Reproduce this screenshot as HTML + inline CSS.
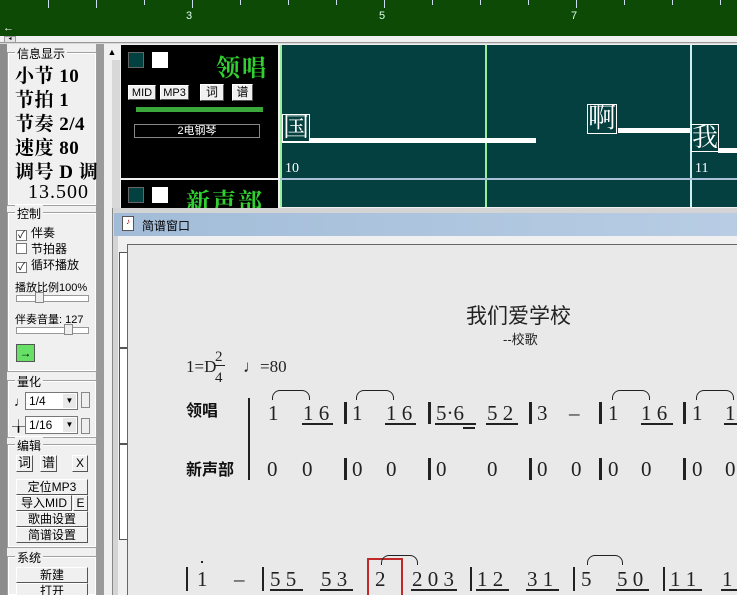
<!DOCTYPE html>
<html><head><meta charset="utf-8"><style>
*{margin:0;padding:0;box-sizing:border-box}
html{width:737px;height:595px;overflow:hidden}
body{width:737px;height:595px;overflow:hidden;position:relative;background:#d8d8d8;font-family:"Liberation Sans","Noto Sans CJK SC",sans-serif}
.a{position:absolute}
.cj{font-family:"Liberation Serif","Noto Serif CJK SC",serif}
.grp{position:absolute;left:8px;width:88px;border:1px solid #fff;outline:1px solid #a0a0a0;background:#f0f0f0}
.gt{position:absolute;top:-9px;left:6px;background:#f0f0f0;font-size:12px;padding:0 2px;color:#000}
.info{position:absolute;left:15px;font-size:19px;font-weight:bold;font-family:"Liberation Serif","Noto Serif CJK SC",serif;color:#000;white-space:nowrap;letter-spacing:0.5px}
.cb{position:absolute;left:8px;font-size:12px;white-space:nowrap}
.cb i{display:inline-block;width:11px;height:11px;border:1px solid #777;background:#fff;vertical-align:-1px;margin-right:4px;font-style:normal;font-size:10px;line-height:9px;text-align:center}
.btn{position:absolute;background:#f0f0f0;border:1px solid;border-color:#fff #555 #555 #fff;font-size:12px;text-align:center;line-height:14px}
.n{position:absolute;font-family:"Liberation Serif",serif;font-size:21px;color:#222;line-height:20px;white-space:nowrap}
.bar{position:absolute;width:3px;height:22px;background:#222}
.ul{position:absolute;height:1.5px;background:#222}
.tie{position:absolute;height:10px;border:1.5px solid #222;border-bottom:none;border-radius:8px 8px 0 0}
</style></head><body>
<div class="a" style="left:0;top:0;width:737px;height:36px;background:#0c4a06"></div>
<div class="a" style="left:48px;top:0;width:1px;height:8px;background:#cde"></div>
<div class="a" style="left:96px;top:0;width:1px;height:8px;background:#cde"></div>
<div class="a" style="left:144px;top:0;width:1px;height:5px;background:#cde"></div>
<div class="a" style="left:192px;top:0;width:1px;height:8px;background:#cde"></div>
<div class="a" style="left:240px;top:0;width:1px;height:5px;background:#cde"></div>
<div class="a" style="left:288px;top:0;width:1px;height:5px;background:#cde"></div>
<div class="a" style="left:336px;top:0;width:1px;height:5px;background:#cde"></div>
<div class="a" style="left:384px;top:0;width:1px;height:8px;background:#cde"></div>
<div class="a" style="left:432px;top:0;width:1px;height:5px;background:#cde"></div>
<div class="a" style="left:480px;top:0;width:1px;height:5px;background:#cde"></div>
<div class="a" style="left:528px;top:0;width:1px;height:5px;background:#cde"></div>
<div class="a" style="left:576px;top:0;width:1px;height:8px;background:#cde"></div>
<div class="a" style="left:624px;top:0;width:1px;height:5px;background:#cde"></div>
<div class="a" style="left:672px;top:0;width:1px;height:5px;background:#cde"></div>
<div class="a" style="left:720px;top:0;width:1px;height:5px;background:#cde"></div>
<div class="a" style="left:186px;top:10px;color:#dfe;font-size:11px">3</div>
<div class="a" style="left:379px;top:10px;color:#dfe;font-size:11px">5</div>
<div class="a" style="left:571px;top:10px;color:#dfe;font-size:11px">7</div>
<div class="a" style="left:3px;top:22px;color:#fff;font-size:11px">&larr;</div>
<div class="a" style="left:0;top:36px;width:737px;height:7px;background:#f0f0f0;border-bottom:1px solid #999"></div>
<div class="a" style="left:4px;top:36px;width:12px;height:7px;background:#e4e4e4;border:1px solid #999;font-size:6px;line-height:5px;text-align:center">◂</div>
<div class="a" style="left:0;top:44px;width:7px;height:551px;background:#8c8c8c"></div>
<div class="a" style="left:7px;top:44px;width:93px;height:551px;background:#f0f0f0"></div>
<div class="a" style="left:96px;top:44px;width:8px;height:551px;background:#9a9a9a"></div>
<div class="a" style="left:104px;top:44px;width:8px;height:551px;background:#f0f0f0"></div>
<div class="a" style="left:104px;top:44px;width:16px;height:16px;background:#f0f0f0;font-size:9px;text-align:center;line-height:16px">▲</div>
<div class="grp" style="top:53px;height:152px"><span class="gt">信息显示</span></div>
<div class="info" style="top:61px">小节 10</div>
<div class="info" style="top:85px">节拍 1</div>
<div class="info" style="top:109px">节奏 2/4</div>
<div class="info" style="top:133px">速度 80</div>
<div class="info" style="top:157px">调号 D 调</div>
<div class="info" style="top:181px;left:28px;font-weight:normal;font-size:20px;letter-spacing:1px">13.500</div>
<div class="grp" style="top:213px;height:158px"><span class="gt">控制</span></div>
<div class="cb" style="top:224px;left:16px"><i>✓</i>伴奏</div>
<div class="cb" style="top:240px;left:16px"><i></i>节拍器</div>
<div class="cb" style="top:256px;left:16px"><i>✓</i>循环播放</div>
<div class="a" style="left:15px;top:279px;font-size:11px">播放比例100%</div>
<div class="a" style="left:16px;top:295px;width:73px;height:7px;background:#fff;border:1px solid #999"></div>
<div class="a" style="left:35px;top:292px;width:9px;height:11px;background:#eee;border:1px solid #888"></div>
<div class="a" style="left:15px;top:311px;font-size:11px">伴奏音量: 127</div>
<div class="a" style="left:16px;top:327px;width:73px;height:7px;background:#fff;border:1px solid #999"></div>
<div class="a" style="left:64px;top:324px;width:9px;height:11px;background:#eee;border:1px solid #888"></div>
<div class="a" style="left:16px;top:344px;width:19px;height:18px;background:#66e066;border:1px solid #555;font-size:12px;text-align:center;line-height:16px">→</div>
<div class="grp" style="top:381px;height:56px"><span class="gt">量化</span></div>
<div class="a" style="left:14px;top:394px;font-size:13px">♩</div>
<div class="a" style="left:25px;top:392px;width:53px;height:18px;background:#fff;border:1px solid #777;font-size:12px;padding-left:3px;line-height:16px">1/4</div>
<div class="a" style="left:63px;top:394px;width:13px;height:14px;background:#e8e8e8;font-size:8px;text-align:center;line-height:14px">▼</div>
<div class="a" style="left:81px;top:392px;width:9px;height:16px;border:1px solid #888;background:#eee"></div>
<div class="a" style="left:12px;top:416px;font-size:13px">╁</div>
<div class="a" style="left:25px;top:416px;width:53px;height:18px;background:#fff;border:1px solid #777;font-size:12px;padding-left:3px;line-height:16px">1/16</div>
<div class="a" style="left:63px;top:418px;width:13px;height:14px;background:#e8e8e8;font-size:8px;text-align:center;line-height:14px">▼</div>
<div class="a" style="left:81px;top:418px;width:9px;height:16px;border:1px solid #888;background:#eee"></div>
<div class="grp" style="top:445px;height:102px"><span class="gt">编辑</span></div>
<div class="btn" style="left:16px;top:455px;width:17px;height:17px;font-size:13px">词</div>
<div class="btn" style="left:40px;top:455px;width:17px;height:17px;font-size:13px">谱</div>
<div class="btn" style="left:72px;top:455px;width:16px;height:17px">X</div>
<div class="btn" style="left:16px;top:479px;width:72px;height:16px">定位MP3</div>
<div class="btn" style="left:16px;top:495px;width:56px;height:16px">导入MID</div>
<div class="btn" style="left:73px;top:495px;width:15px;height:16px">E</div>
<div class="btn" style="left:16px;top:511px;width:72px;height:16px">歌曲设置</div>
<div class="btn" style="left:16px;top:527px;width:72px;height:16px">简谱设置</div>
<div class="grp" style="top:557px;height:38px"><span class="gt">系统</span></div>
<div class="btn" style="left:16px;top:567px;width:72px;height:16px">新建</div>
<div class="btn" style="left:16px;top:583px;width:72px;height:16px">打开</div>
<div class="a" style="left:120px;top:44px;width:617px;height:164px;background:#f0f0f0"></div>
<div class="a" style="left:121px;top:45px;width:157px;height:133px;background:#000"></div>
<div class="a" style="left:121px;top:180px;width:157px;height:28px;background:#000"></div>
<div class="a" style="left:128px;top:52px;width:16px;height:16px;background:#034040;border:1px solid #666"></div>
<div class="a" style="left:152px;top:52px;width:16px;height:16px;background:#fff"></div>
<div class="a cj" style="left:216px;top:48px;color:#30d030;font-size:24px;font-weight:bold;letter-spacing:2px">领唱</div>
<div class="btn" style="left:128px;top:85px;width:28px;height:15px;font-size:11px">MID</div>
<div class="btn" style="left:160px;top:85px;width:29px;height:15px;font-size:11px">MP3</div>
<div class="btn" style="left:200px;top:84px;width:24px;height:17px;font-size:12px">词</div>
<div class="btn" style="left:232px;top:84px;width:21px;height:17px;font-size:12px">谱</div>
<div class="a" style="left:136px;top:107px;width:127px;height:5px;background:#3aa83a"></div>
<div class="a" style="left:134px;top:124px;width:126px;height:14px;border:1px solid #888;color:#fff;font-size:11px;text-align:center;line-height:12px">2电钢琴</div>
<div class="a" style="left:128px;top:187px;width:16px;height:16px;background:#034040;border:1px solid #666"></div>
<div class="a" style="left:152px;top:187px;width:16px;height:16px;background:#fff"></div>
<div class="a cj" style="left:186px;top:182px;color:#30d030;font-size:24px;font-weight:bold;letter-spacing:2px;height:26px;overflow:hidden">新声部</div>
<div class="a" style="left:280px;top:45px;width:457px;height:162px;background:#03403f"></div>
<div class="a" style="left:280px;top:45px;width:2px;height:162px;background:#9e9"></div>
<div class="a" style="left:485px;top:45px;width:2px;height:162px;background:#9e9"></div>
<div class="a" style="left:690px;top:45px;width:2px;height:162px;background:#cee"></div>
<div class="a" style="left:280px;top:178px;width:457px;height:2px;background:#aac0d8"></div>
<div class="a" style="left:282px;top:138px;width:254px;height:5px;background:#fff"></div>
<div class="a" style="left:618px;top:128px;width:72px;height:5px;background:#fff"></div>
<div class="a" style="left:718px;top:148px;width:19px;height:5px;background:#fff"></div>
<div class="a cj" style="left:282px;top:114px;width:28px;height:28px;border:1px solid #fff;color:#fff;font-size:26px;line-height:26px;background:#03403f">国</div>
<div class="a cj" style="left:587px;top:104px;width:30px;height:30px;border:1px solid #fff;color:#fff;font-size:28px;line-height:28px;background:#03403f">啊</div>
<div class="a cj" style="left:691px;top:124px;width:28px;height:28px;border:1px solid #fff;color:#fff;font-size:26px;line-height:26px;background:#03403f">我</div>
<div class="a" style="left:285px;top:161px;color:#fff;font-size:14px;font-family:'Liberation Serif',serif">10</div>
<div class="a" style="left:695px;top:161px;color:#fff;font-size:14px;font-family:'Liberation Serif',serif">11</div>
<div class="a" style="left:112px;top:208px;width:625px;height:387px;background:#d4d4d4;border-left:1px solid #888"></div>
<div class="a" style="left:114px;top:213px;width:623px;height:23px;background:linear-gradient(90deg,#a2bcd8,#b8cde4)"></div>
<div class="a" style="left:122px;top:216px;width:12px;height:15px;background:#fff;border:1px solid #555;font-size:8px;color:#a00;text-align:center">♪</div>
<div class="a" style="left:142px;top:217px;font-size:12px;color:#000">简谱窗口</div>
<div class="a" style="left:118px;top:236px;width:619px;height:359px;background:#f0f0f0"></div>
<div class="a" style="left:119px;top:252px;width:9px;height:96px;border:1px solid #555;border-right:none;background:#fff"></div>
<div class="a" style="left:119px;top:348px;width:9px;height:96px;border:1px solid #555;border-right:none;background:#fff"></div>
<div class="a" style="left:119px;top:444px;width:9px;height:96px;border:1px solid #555;border-right:none;background:#fff"></div>
<div class="a" style="left:127px;top:244px;width:610px;height:351px;background:#e9e9e9;border-left:1px solid #666;border-top:1px solid #666"></div>
<div class="a" style="left:466px;top:300px;font-size:21px;color:#222">我们爱学校</div>
<div class="a" style="left:503px;top:329px;font-size:13px;color:#222">--校歌</div>
<div class="n" style="left:186px;top:357px;font-size:17px">1=D</div>
<div class="n" style="left:215px;top:347px;font-size:15px">2</div>
<div class="a" style="left:214px;top:365px;width:11px;height:1px;background:#222"></div>
<div class="n" style="left:215px;top:368px;font-size:15px">4</div>
<div class="n" style="left:243px;top:357px;font-size:17px">♩=80</div>
<div class="a" style="left:186px;top:397px;font-size:16px;font-weight:bold;color:#111">领唱</div>
<div class="a" style="left:186px;top:456px;font-size:16px;font-weight:bold;color:#111">新声部</div>
<div class="a" style="left:248px;top:398px;width:1.5px;height:82px;background:#222"></div>
<div class="n" style="left:268px;top:403px">1</div>
<div class="n" style="left:303px;top:403px">1 6</div><div class="ul" style="left:302px;top:423px;width:31px"></div>
<div class="tie" style="left:272px;top:390px;width:38px"></div>
<div class="bar" style="left:344px;top:402px"></div>
<div class="n" style="left:352px;top:403px">1</div>
<div class="n" style="left:386px;top:403px">1 6</div><div class="ul" style="left:385px;top:423px;width:31px"></div>
<div class="tie" style="left:356px;top:390px;width:38px"></div>
<div class="bar" style="left:428px;top:402px"></div>
<div class="n" style="left:436px;top:403px">5·6</div><div class="ul" style="left:435px;top:423px;width:41px"></div><div class="ul" style="left:463px;top:427px;width:12px"></div>
<div class="n" style="left:487px;top:403px">5 2</div><div class="ul" style="left:486px;top:423px;width:32px"></div>
<div class="bar" style="left:529px;top:402px"></div>
<div class="n" style="left:537px;top:403px">3</div>
<div class="n" style="left:569px;top:403px">–</div>
<div class="bar" style="left:599px;top:402px"></div>
<div class="n" style="left:608px;top:403px">1</div>
<div class="n" style="left:641px;top:403px">1 6</div><div class="ul" style="left:641px;top:423px;width:32px"></div>
<div class="tie" style="left:612px;top:390px;width:38px"></div>
<div class="bar" style="left:683px;top:402px"></div>
<div class="n" style="left:692px;top:403px">1</div>
<div class="n" style="left:725px;top:403px">1</div><div class="ul" style="left:724px;top:423px;width:13px"></div>
<div class="tie" style="left:696px;top:390px;width:38px"></div>
<div class="n" style="left:267px;top:459px">0</div>
<div class="n" style="left:302px;top:459px">0</div>
<div class="bar" style="left:344px;top:458px"></div>
<div class="n" style="left:352px;top:459px">0</div>
<div class="n" style="left:386px;top:459px">0</div>
<div class="bar" style="left:428px;top:458px"></div>
<div class="n" style="left:436px;top:459px">0</div>
<div class="n" style="left:487px;top:459px">0</div>
<div class="bar" style="left:529px;top:458px"></div>
<div class="n" style="left:537px;top:459px">0</div>
<div class="n" style="left:571px;top:459px">0</div>
<div class="bar" style="left:599px;top:458px"></div>
<div class="n" style="left:608px;top:459px">0</div>
<div class="n" style="left:641px;top:459px">0</div>
<div class="bar" style="left:683px;top:458px"></div>
<div class="n" style="left:692px;top:459px">0</div>
<div class="n" style="left:725px;top:459px">0</div>
<div class="a" style="left:186px;top:567px;width:1.5px;height:24px;background:#222"></div>
<div class="n" style="left:197px;top:569px">1</div><div class="a" style="left:201px;top:561px;width:2px;height:2px;background:#222"></div>
<div class="n" style="left:234px;top:569px">–</div>
<div class="a" style="left:262px;top:567px;width:1.5px;height:24px;background:#222"></div>
<div class="n" style="left:270px;top:569px">5 5</div><div class="ul" style="left:270px;top:589px;width:33px"></div>
<div class="n" style="left:321px;top:569px">5 3</div><div class="ul" style="left:320px;top:589px;width:33px"></div>
<div class="a" style="left:367px;top:558px;width:36px;height:40px;border:2px solid #c0282a"></div>
<div class="n" style="left:375px;top:569px">2</div>
<div class="tie" style="left:381px;top:555px;width:37px"></div>
<div class="n" style="left:412px;top:569px">2 0 3</div><div class="ul" style="left:411px;top:589px;width:46px"></div>
<div class="a" style="left:470px;top:567px;width:1.5px;height:24px;background:#222"></div>
<div class="n" style="left:477px;top:569px">1 2</div><div class="ul" style="left:476px;top:589px;width:33px"></div>
<div class="n" style="left:527px;top:569px">3 1</div><div class="ul" style="left:526px;top:589px;width:33px"></div>
<div class="a" style="left:573px;top:567px;width:1.5px;height:24px;background:#222"></div>
<div class="n" style="left:581px;top:569px">5</div>
<div class="tie" style="left:587px;top:555px;width:36px"></div>
<div class="n" style="left:617px;top:569px">5 0</div><div class="ul" style="left:616px;top:589px;width:33px"></div>
<div class="a" style="left:663px;top:567px;width:1.5px;height:24px;background:#222"></div>
<div class="n" style="left:670px;top:569px">1 1</div><div class="ul" style="left:669px;top:589px;width:33px"></div>
<div class="n" style="left:722px;top:569px">1</div><div class="ul" style="left:721px;top:589px;width:16px"></div>
</body></html>
